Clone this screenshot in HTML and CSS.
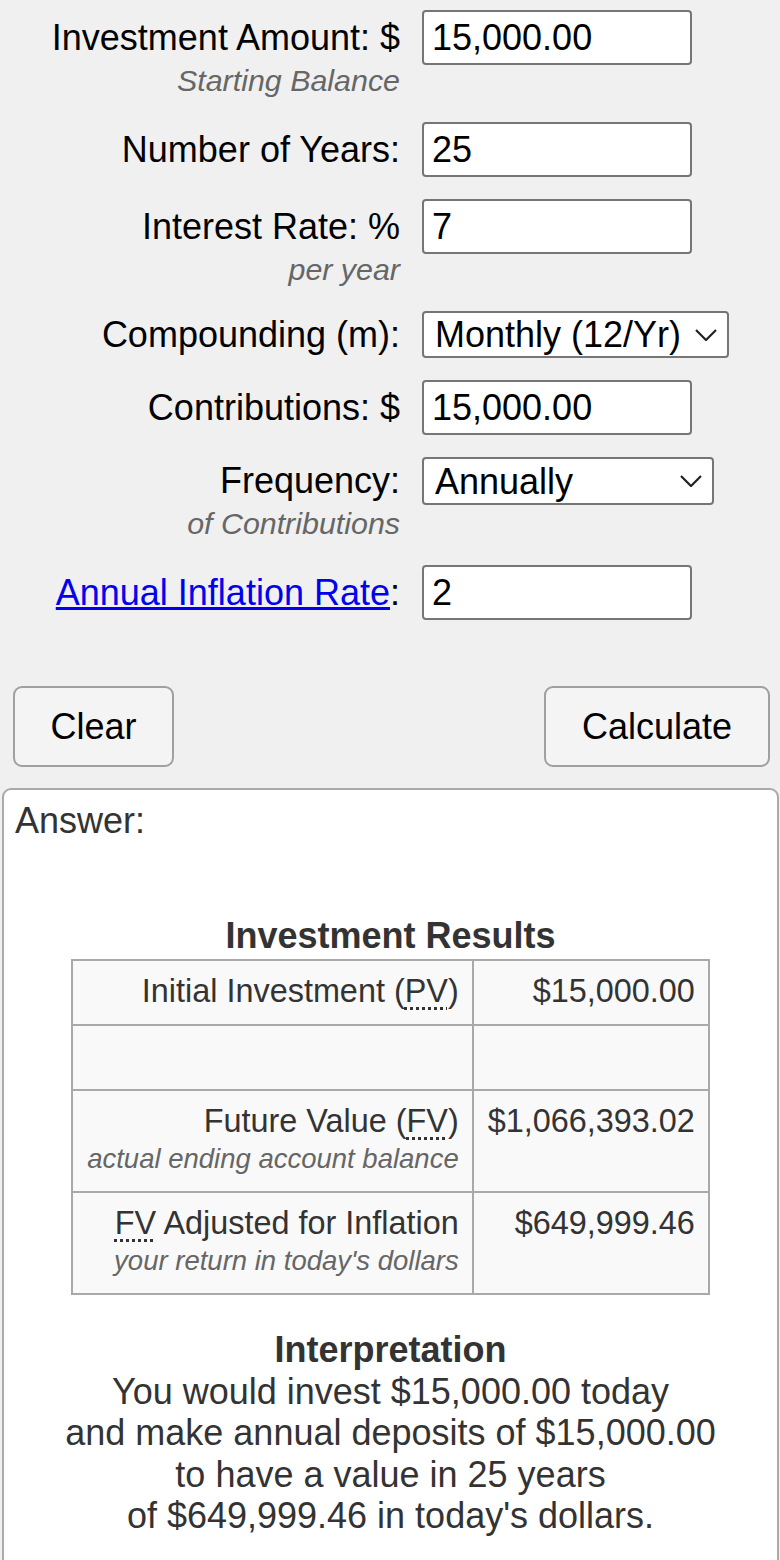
FILE: index.html
```html
<!DOCTYPE html>
<html lang="en">
<head>
<meta charset="utf-8">
<title>Investment Calculator</title>
<link rel="stylesheet" href="styles.css">
</head>
<body>
<form class="calc">
  <div class="fields">
    <div class="row">
      <label class="lbl" for="pv">Investment Amount: $</label>
      <input class="txt" id="pv" type="text" value="15,000.00">
      <div class="sub">Starting Balance</div>
    </div>
    <div class="row">
      <label class="lbl" for="n">Number of Years:</label>
      <input class="txt" id="n" type="text" value="25">
    </div>
    <div class="row">
      <label class="lbl" for="r">Interest Rate: %</label>
      <input class="txt" id="r" type="text" value="7">
      <div class="sub">per year</div>
    </div>
    <div class="row">
      <label class="lbl" for="m">Compounding (m):</label>
      <div class="selwrap">
        <select class="sel sel-comp" id="m"><option>Monthly (12/Yr)</option></select>
        <svg class="chev" viewBox="0 0 22 12" width="22" height="12"><polyline points="1,1 11,11 21,1"/></svg>
      </div>
    </div>
    <div class="row">
      <label class="lbl" for="pmt">Contributions: $</label>
      <input class="txt" id="pmt" type="text" value="15,000.00">
    </div>
    <div class="row">
      <label class="lbl" for="q">Frequency:</label>
      <div class="selwrap">
        <select class="sel sel-freq" id="q"><option>Annually</option></select>
        <svg class="chev" viewBox="0 0 22 12" width="22" height="12"><polyline points="1,1 11,11 21,1"/></svg>
      </div>
      <div class="sub sub-sel">of Contributions</div>
    </div>
    <div class="row">
      <label class="lbl" for="inf"><a href="#inflation">Annual Inflation Rate</a>:</label>
      <input class="txt" id="inf" type="text" value="2">
    </div>
  </div>
  <div class="buttons">
    <button type="button" class="btn btn-clear">Clear</button>
    <button type="button" class="btn btn-calc">Calculate</button>
  </div>
</form>
<div class="answer">
  <div class="answer-title">Answer:</div>
  <table class="results">
    <caption>Investment Results</caption>
    <tr>
      <td class="c-lbl">Initial Investment (<abbr title="Present Value">PV</abbr>)</td>
      <td class="c-val">$15,000.00</td>
    </tr>
    <tr>
      <td class="c-lbl">&nbsp;</td>
      <td class="c-val">&nbsp;</td>
    </tr>
    <tr>
      <td class="c-lbl">Future Value (<abbr title="Future Value">FV</abbr>)<div class="c-sub">actual ending account balance</div></td>
      <td class="c-val">$1,066,393.02</td>
    </tr>
    <tr>
      <td class="c-lbl"><abbr title="Future Value">FV</abbr> Adjusted for Inflation<div class="c-sub">your return in today's dollars</div></td>
      <td class="c-val">$649,999.46</td>
    </tr>
  </table>
  <div class="interp">
    <div class="interp-title">Interpretation</div>
    <div>You would invest $15,000.00 today</div>
    <div>and make annual deposits of $15,000.00</div>
    <div>to have a value in 25 years</div>
    <div>of $649,999.46 in today's dollars.</div>
  </div>
</div>
</body>
</html>
```

FILE: styles.css
```css
html, body {
  margin: 0;
  padding: 0;
}
body {
  background: #f0f0f0;
  font-family: "Liberation Sans", Arial, sans-serif;
  font-size: 36px;
  color: #000;
}
.calc {
  padding-top: 10px;
}
.fields {
  display: flex;
  flex-direction: column;
  gap: 22px;
}
.row {
  display: grid;
  grid-template-columns: 400px 1fr;
  column-gap: 22px;
  align-items: center;
}
.lbl {
  text-align: right;
  line-height: 40px;
  white-space: nowrap;
}
.lbl a {
  color: #0000ee;
  text-decoration: underline;
}
.sub {
  grid-column: 1;
  text-align: right;
  font-style: italic;
  font-size: 30.4px;
  line-height: 34px;
  color: #666;
  margin-top: -2px;
  padding-bottom: 3px;
}
.sub-sel {
  margin-top: 1px;
}
.txt {
  box-sizing: border-box;
  width: 270px;
  height: 55px;
  margin: 0;
  padding: 0 8px;
  border: 2px solid #767676;
  border-radius: 4px;
  background: #fff;
  font-family: inherit;
  font-size: 36px;
  color: #000;
}
.selwrap {
  position: relative;
  justify-self: start;
  display: flex;
}
.sel {
  box-sizing: border-box;
  -webkit-appearance: none;
  appearance: none;
  margin: 0;
  padding: 0 0 0 11px;
  border: 2px solid #767676;
  border-radius: 4px;
  background: #fff;
  font-family: inherit;
  font-size: 36px;
  color: #000;
}
.sel-comp {
  width: 307px;
  height: 47px;
}
.sel-freq {
  width: 292px;
  height: 48px;
}
.chev {
  position: absolute;
  right: 12px;
  top: 50%;
  transform: translateY(-50%);
  pointer-events: none;
}
.chev polyline {
  fill: none;
  stroke: #222;
  stroke-width: 2.2;
}
.buttons {
  display: flex;
  justify-content: space-between;
  padding: 0 10px 0 13px;
  margin-top: 66px;
}
.btn {
  box-sizing: border-box;
  height: 81px;
  margin: 0;
  border: 2px solid #a0a0a0;
  border-radius: 9px;
  background: #f4f4f4;
  font-family: inherit;
  font-size: 36px;
  color: #000;
}
.btn-clear {
  width: 161px;
}
.btn-calc {
  width: 226px;
}
.answer {
  margin: 21px 1px 0 2px;
  border: 2px solid #aaa;
  border-radius: 9px;
  background: #fff;
  padding: 10px 11px 60px;
  color: #333;
}
.answer-title {
  line-height: 41px;
  margin-bottom: 74px;
}
.results {
  width: 636px;
  margin: 0 auto;
  border-collapse: collapse;
  font-size: 32.4px;
  color: #333;
}
.results caption {
  font-weight: bold;
  font-size: 36px;
  line-height: 41px;
  padding-bottom: 3px;
}
.results td {
  border: 2px solid #a9a9a9;
  background: #f9f9f9;
  padding: 12px 13px 14px 14px;
  line-height: 37px;
  text-align: right;
  vertical-align: top;
}
.c-lbl {
  width: 372px;
  white-space: nowrap;
}
.c-sub {
  font-style: italic;
  font-size: 27.5px;
  color: #666;
  white-space: nowrap;
}
abbr {
  text-decoration: underline dotted;
  text-decoration-thickness: 3px;
  text-underline-offset: 5px;
}
.interp {
  margin-top: 34px;
  text-align: center;
  line-height: 41.5px;
}
.interp-title {
  font-weight: bold;
}
```
